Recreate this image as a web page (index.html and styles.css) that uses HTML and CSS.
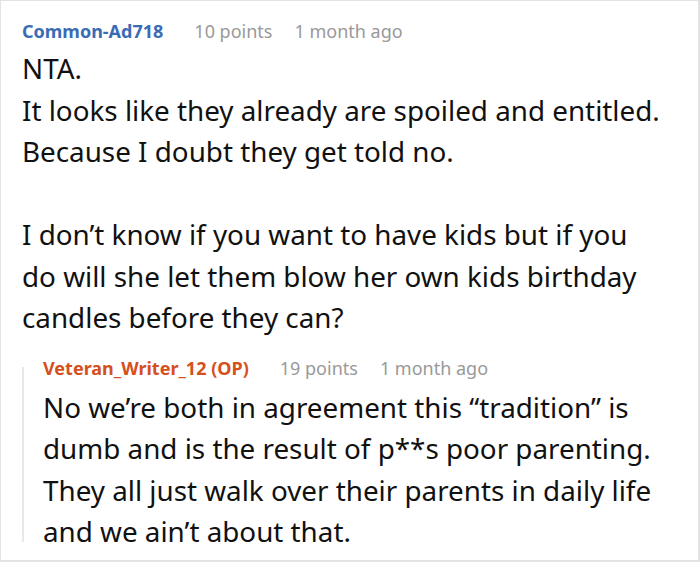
FILE: index.html
```html
<!DOCTYPE html>
<html>
<head>
<meta charset="utf-8">
<link rel="stylesheet" href="styles.css">
</head>
<body>
<div class="frame">
  <div class="comment">
    <div class="meta">
      <span class="user">Common-Ad718</span>
      <span class="info">10 points</span>
      <span class="info">1 month ago</span>
    </div>
    <div class="body main">
      <p>NTA.<br>It looks like they already are spoiled and entitled. Because I doubt they get told no.</p>
      <p>I don’t know if you want to have kids but if you do will she let them blow her own kids birthday candles before they can?</p>
    </div>
    <div class="reply">
      <div class="meta">
        <span class="user op">Veteran_Writer_12 (OP)</span>
        <span class="info">19 points</span>
        <span class="info">1 month ago</span>
      </div>
      <div class="body">
        <p>No we’re both in agreement this “tradition” is dumb and is the result of p**s poor parenting. They all just walk over their parents in daily life and we ain’t about that.</p>
      </div>
    </div>
  </div>
</div>
</body>
</html>
```
FILE: styles.css
```css
html, body {
  margin: 0;
  padding: 0;
  background: #fff;
}
.frame {
  width: 700px;
  height: 562px;
  box-sizing: border-box;
  border: 1px solid #e3e3e3;
  border-bottom-width: 2px;
  border-right-width: 2px;
  overflow: hidden;
}
.comment {
  padding: 18px 6px 0 21px;
  font-family: "Noto Sans", "Open Sans", sans-serif;
}
.meta {
  display: flex;
  gap: 22px;
  font-size: 18px;
  line-height: 24px;
  white-space: nowrap;
}
.user {
  font-weight: bold;
  color: #3a6cb5;
  margin-right: 9px;
}
.user.op {
  color: #d5501d;
}
.info {
  color: #999;
}
.body {
  color: #111;
  font-size: 27.8px;
  line-height: 41.5px;
  margin-top: 5px;
}
.body.main {
  max-width: 645px;
}
.body p {
  margin: 0 0 41.5px 0;
}
.body p:last-child {
  margin-bottom: 0;
}
.reply {
  display: flex;
  flex-direction: column;
  margin-top: 28px;
  border-left: 2px solid #e8e8e8;
  padding-left: 19px;
}
.reply .meta {
  position: relative;
  top: -11px;
  margin-bottom: -11px;
}
.reply .body {
  margin-top: 7px;
  margin-bottom: -11px;
}
```
